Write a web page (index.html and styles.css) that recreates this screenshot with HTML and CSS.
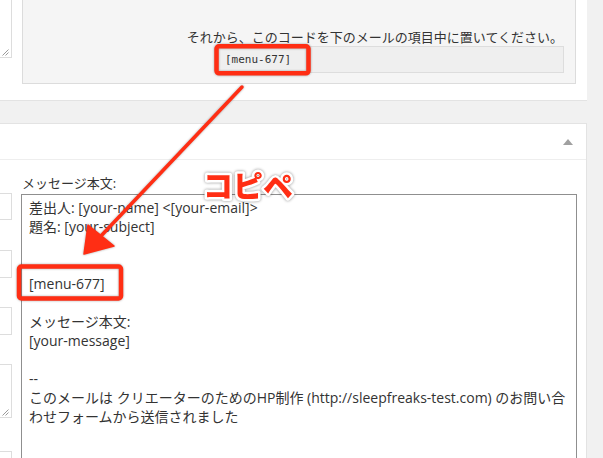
FILE: index.html
```html
<!DOCTYPE html>
<html lang="ja">
<head>
    <meta charset="UTF-8">
    <meta name="viewport" content="width=device-width, initial-scale=1.0">
    <title>メール設定</title>
    <link rel="stylesheet" href="styles.css">
</head>
<body>
    <div class="page">
        <!-- タグ生成パネル -->
        <div class="panel-top">
            <div class="stub-col">
                <div class="stub stub-area">
                    <svg class="grip" width="8" height="8" viewBox="0 0 8 8"><path d="M7.5 1.5 L1.5 7.5 M7.5 4.5 L4.5 7.5" stroke="#9a9a9a" stroke-width="1"/></svg>
                </div>
            </div>
            <div class="tag-box">
                <p class="tag-hint">それから、このコードを下のメールの項目中に置いてください。</p>
                <input class="tag-code" type="text" readonly value="[menu-677]">
            </div>
        </div>

        <!-- メールパネル -->
        <div class="panel-mail">
            <div class="panel-head"><span class="toggle"></span></div>
            <div class="panel-body">
                <div class="stub-col stub-list">
                    <div class="stub s1"></div>
                    <div class="stub s2"></div>
                    <div class="stub s3"></div>
                    <div class="stub s4">
                        <svg class="grip" width="8" height="8" viewBox="0 0 8 8"><path d="M7.5 1.5 L1.5 7.5 M7.5 4.5 L4.5 7.5" stroke="#9a9a9a" stroke-width="1"/></svg>
                    </div>
                    <div class="stub s5"></div>
                </div>
                <div class="mail-field">
                    <label for="mailBody">メッセージ本文:</label>
                    <textarea id="mailBody" class="mail-body">差出人: [your-name] &lt;[your-email]&gt;
題名: [your-subject]


[menu-677]

メッセージ本文:
[your-message]

--
このメールは クリエーターのためのHP制作 (http://sleepfreaks-test.com) のお問い合わせフォームから送信されました</textarea>
                </div>
            </div>
        </div>
    </div>

    <!-- 注釈（赤枠・矢印・コピペ） -->
    <svg class="annot" width="603" height="458" viewBox="0 0 603 458">
        <g class="marks">
            <rect x="216.5" y="46.3" width="92" height="27" rx="2.5"/>
            <rect x="19" y="266.5" width="102" height="32" rx="2.5"/>
            <line x1="242" y1="87" x2="100" y2="237"/>
            <polygon points="84,254 88,225 114,246"/>
        </g>
        <text class="copipe" x="203" y="197">コピペ</text>
    </svg>
</body>
</html>
```

FILE: styles.css
```css
html, body {
    margin: 0;
    height: 458px;
    overflow: hidden;
}
body {
    position: relative;
    background-color: #f1f1f1;
    font-family: "Open Sans", "Noto Sans CJK JP", sans-serif;
    font-size: 13px;
    color: #333;
}
.page {
    width: 587px;
}
/* 上のパネル */
.panel-top {
    display: flex;
    background-color: #fff;
    height: 100px;
    border-bottom: 1px solid #e3e3e3;
}
.stub-col {
    width: 12px;
    flex-shrink: 0;
}
.stub {
    position: relative;
    box-sizing: border-box;
    background-color: #fff;
    border: 1px solid #ddd;
    border-left: none;
}
.stub-area {
    height: 58px;
    border-top: none;
}
.grip {
    position: absolute;
    right: 2px;
    bottom: 1px;
}
.tag-box {
    box-sizing: border-box;
    margin-left: 10px;
    width: 554px;
    height: 84px;
    background-color: #f5f5f5;
    border: 1px solid #dcdcdc;
    border-top: none;
    padding: 28px 11px 0 0;
}
.tag-hint {
    margin: 0 1px 0 0;
    line-height: 18px;
    text-align: right;
}
.tag-code {
    display: block;
    box-sizing: border-box;
    margin-left: auto;
    width: 348px;
    height: 27px;
    padding: 0 8px;
    background-color: #efefef;
    border: 1px solid #ddd;
    font-family: "DejaVu Sans Mono", monospace;
    font-size: 11px;
    color: #333;
    outline: none;
}
/* メールパネル */
.panel-mail {
    margin-top: 22px;
    background-color: #fff;
    border-top: 1px solid #e3e3e3;
    border-right: 1px solid #e3e3e3;
    height: 340px;
}
.panel-head {
    display: flex;
    justify-content: flex-end;
    align-items: center;
    height: 35px;
    border-bottom: 1px solid #eee;
    padding-right: 13px;
}
.toggle {
    width: 0;
    height: 0;
    border-left: 5px solid transparent;
    border-right: 5px solid transparent;
    border-bottom: 6px solid #a0a0a0;
}
.panel-body {
    display: flex;
}
.stub-list {
    padding-top: 33px;
}
.s1 { height: 27px; }
.s2 { height: 28px; margin-top: 30px; }
.s3 { height: 28px; margin-top: 29px; }
.s4 { height: 54px; margin-top: 29px; }
.s5 { height: 40px; margin-top: 33px; }
.mail-field {
    margin-left: 9px;
    padding-top: 14px;
}
.mail-field label {
    display: block;
    line-height: 18px;
    margin-left: 1px;
}
.mail-body {
    display: block;
    box-sizing: border-box;
    margin-top: 2px;
    width: 556px;
    height: 290px;
    padding: 3px 8px 0 7px;
    border: 1px solid #8f8f8f;
    font-family: "Open Sans", "Noto Sans CJK JP", sans-serif;
    font-size: 14px;
    line-height: 19px;
    color: #333;
    resize: none;
    overflow: hidden;
    outline: none;
}
/* 注釈 */
.annot {
    position: absolute;
    top: 0;
    left: 0;
    pointer-events: none;
}
.marks {
    filter: drop-shadow(0 0 1px rgba(0, 0, 0, 0.35));
}
.marks rect {
    fill: none;
    stroke: #ff2e14;
    stroke-width: 4.5;
}
.marks line {
    stroke: #ff2e14;
    stroke-width: 3.5;
    stroke-linecap: round;
}
.marks polygon {
    fill: #ff2e14;
    stroke: #ff2e14;
    stroke-width: 1.5;
    stroke-linejoin: round;
}
.copipe {
    font-family: "Noto Sans CJK JP", sans-serif;
    font-weight: 900;
    font-size: 30px;
    fill: #ff2e14;
    stroke: #fff;
    stroke-width: 5px;
    stroke-linejoin: round;
    paint-order: stroke;
    filter: drop-shadow(0 0 1.5px rgba(0, 0, 0, 0.45));
}
```
